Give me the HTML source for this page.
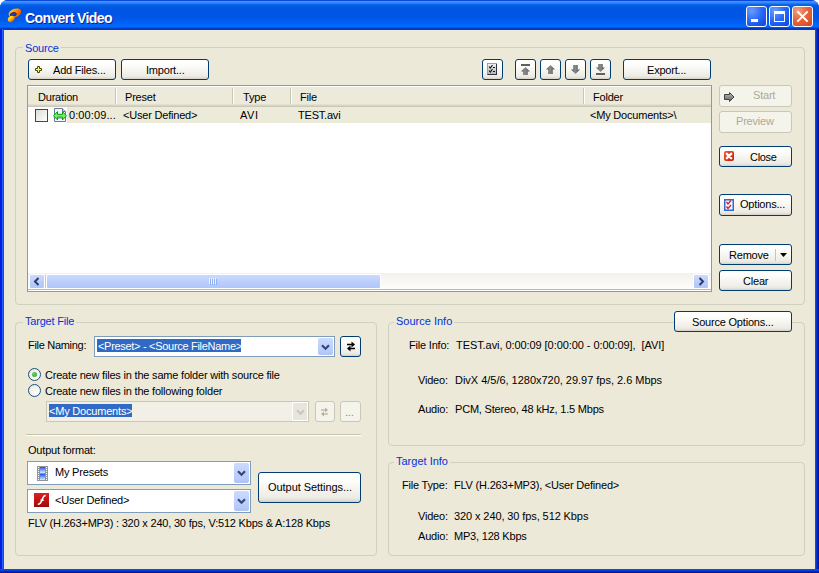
<!DOCTYPE html>
<html><head><meta charset="utf-8"><style>
*{box-sizing:border-box;margin:0;padding:0}
html,body{width:819px;height:573px;overflow:hidden;background:#fff}
body{position:relative;font-family:"Liberation Sans",sans-serif;font-size:11px;color:#000}
.a{position:absolute}
.t{position:absolute;white-space:pre;line-height:13px;letter-spacing:-0.2px}
.g{position:absolute;border:1px solid #d0d0bf;border-radius:4px}
.gl{position:absolute;color:#0034d8;background:#ece9d8;padding:0 2px;line-height:13px;white-space:pre;letter-spacing:-0.2px}
.b{position:absolute;border:1px solid #003c74;border-radius:3px;
background:linear-gradient(180deg,#ffffff 0%,#fdfdfb 25%,#f4f3ee 60%,#ecebe5 85%,#e3e0d6 93%,#d6d0c5 100%)}
.bd{position:absolute;border:1px solid #c9c7ba;border-radius:3px;background:#f5f4ea}
.cb{position:absolute;border:1px solid #7f9db9;background:#fff}
.dd{position:absolute;border-radius:2px;background:linear-gradient(180deg,#cddafd 0%,#c1d2fc 40%,#b7caf8 80%,#adc1f4 100%)}
.tb{position:absolute;border:1px solid #fff;border-radius:3px}
svg{position:absolute;overflow:visible}
</style></head><body>
<div class="a" style="left:0;top:0;width:819px;height:573px;border-radius:8px 8px 0 0;background:#0a3bd8;overflow:hidden"></div>
<div class="a" style="left:0;top:0;width:819px;height:30px;border-radius:8px 8px 0 0;background:linear-gradient(180deg,#0a48e0 0px,#0a48e0 1px,#3d95ff 1px,#3a93ff 2px,#2a86fc 3px,#1070f0 4px,#0660e6 5px,#0058e2 7px,#0054e2 10px,#0056e8 17px,#005ff2 22px,#0066fa 25px,#006cff 27px,#0040d0 28px,#0034c0 29px,#0040d0 30px)"></div>
<div class="a" style="left:0;top:29px;width:4px;height:544px;background:linear-gradient(90deg,#0a1ee0 0,#0a1ee0 2px,#2464ff 2px,#2464ff 3px,#0a4ef0 3px)"></div>
<div class="a" style="left:815px;top:29px;width:4px;height:544px;background:linear-gradient(90deg,#0a4cf0 0,#0a4cf0 1px,#0434d4 1px,#0434d4 2px,#0020b8 2px,#0020b8 3px,#00169a 3px)"></div>
<div class="a" style="left:0;top:569px;width:819px;height:4px;background:linear-gradient(180deg,#0a4cf0 0,#0a4cf0 1px,#0840e0 1px,#0840e0 2px,#0024c0 2px,#0024c0 3px,#00189e 3px)"></div>
<div class="a" style="left:4px;top:30px;width:811px;height:539px;background:#ece9d8"></div>
<svg style="left:6px;top:7px" width="18" height="17" viewBox="0 0 18 17">
<defs><linearGradient id="og" x1="0" y1="0" x2="1" y2="1"><stop offset="0" stop-color="#ffd030"/><stop offset="0.45" stop-color="#ff9a00"/><stop offset="1" stop-color="#e83800"/></linearGradient>
<linearGradient id="yg" x1="0" y1="0" x2="0" y2="1"><stop offset="0" stop-color="#fff020"/><stop offset="0.5" stop-color="#ffb000"/><stop offset="1" stop-color="#f05000"/></linearGradient></defs>
<ellipse cx="8.9" cy="6" rx="6.5" ry="4.3" transform="rotate(-20 8.9 6)" fill="url(#og)"/>
<ellipse cx="7.3" cy="7.4" rx="3.1" ry="1.7" transform="rotate(-12 7.3 7.4)" fill="#1048c8" stroke="#301050" stroke-width="0.8"/>
<ellipse cx="5.2" cy="12" rx="3.6" ry="2.7" transform="rotate(-38 5.2 12)" fill="url(#yg)"/>
</svg>
<div class="t" style="left:25px;top:10px;color:#fff;font-weight:bold;font-size:14px;letter-spacing:-0.6px;line-height:17px;text-shadow:1px 1px 0 #0a2090">Convert Video</div>
<div class="tb" style="left:746px;top:6px;width:21px;height:21px;background:radial-gradient(circle at 25% 20%,#6a9cff 0%,#2c6cf8 45%,#1552e8 80%,#0d48dc 100%)"></div>
<div class="a" style="left:751px;top:19px;width:7px;height:3px;background:#fff"></div>
<div class="tb" style="left:769px;top:6px;width:21px;height:21px;background:radial-gradient(circle at 25% 20%,#6a9cff 0%,#2c6cf8 45%,#1552e8 80%,#0d48dc 100%)"></div>
<div class="a" style="left:774px;top:11px;width:11px;height:11px;border:1px solid #fff;border-top-width:3px"></div>
<div class="tb" style="left:792px;top:6px;width:21px;height:21px;background:radial-gradient(circle at 25% 20%,#f0a080 0%,#e56a44 40%,#d9512a 80%,#cc4420 100%)"></div>
<svg style="left:797px;top:11px" width="11" height="11" viewBox="0 0 11 11"><path d="M1 1L10 10M10 1L1 10" stroke="#fff" stroke-width="1.9" stroke-linecap="square"/></svg>
<div class="g" style="left:15px;top:47px;width:790px;height:258px;"></div>
<div class="g" style="left:15px;top:322px;width:362px;height:234px;"></div>
<div class="g" style="left:388px;top:322px;width:417px;height:124px;"></div>
<div class="g" style="left:388px;top:462px;width:417px;height:94px;"></div>
<div class="gl" style="left:23px;top:42px">Source</div>
<div class="gl" style="left:23px;top:315px">Target File</div>
<div class="gl" style="left:394px;top:315px;letter-spacing:0px">Source Info</div>
<div class="gl" style="left:394px;top:455px;letter-spacing:0px">Target Info</div>
<div class="b" style="left:28px;top:59px;width:88px;height:21px;"></div>
<svg style="left:35px;top:66px" width="7" height="7" viewBox="0 0 7 7"><path d="M2.5 0.5H4.5V2.5H6.5V4.5H4.5V6.5H2.5V4.5H0.5V2.5H2.5Z" fill="#f8f070" stroke="#4a4800" stroke-width="1"/></svg>
<div class="t" style="left:53px;top:64px">Add Files...</div>
<div class="b" style="left:121px;top:59px;width:88px;height:21px;"></div>
<div class="t" style="left:146px;top:64px">Import...</div>
<div class="b" style="left:482px;top:59px;width:21px;height:21px;"></div>
<div class="b" style="left:515px;top:59px;width:21px;height:21px;"></div>
<div class="b" style="left:540px;top:59px;width:21px;height:21px;"></div>
<div class="b" style="left:565px;top:59px;width:21px;height:21px;"></div>
<div class="b" style="left:590px;top:59px;width:21px;height:21px;"></div>
<svg style="left:487px;top:63px" width="10" height="12" viewBox="0 0 10 12">
<defs><linearGradient id="cg" x1="0" y1="0" x2="0" y2="1"><stop offset="0" stop-color="#f4f4f4"/><stop offset="1" stop-color="#b4b4b4"/></linearGradient></defs>
<rect x="0.5" y="0.5" width="9" height="11" fill="url(#cg)" stroke="#a0a0a0"/>
<path d="M9.5 1v11M0.5 11.5h9" stroke="#303040"/>
<path d="M2 3.5l1.3 1.5 2.2-3M2 7.5l1.3 1.5 2.2-3" fill="none" stroke="#101010" stroke-width="1.1"/>
<path d="M6 4.5h2M6 8.5h2" stroke="#101010" stroke-width="1.2"/>
</svg>
<svg style="left:521px;top:64px" width="10" height="11" viewBox="0 0 10 11"><defs><linearGradient id="gg" x1="0" y1="0" x2="1" y2="0"><stop offset="0" stop-color="#505050"/><stop offset="0.45" stop-color="#8c8c8c"/><stop offset="1" stop-color="#505050"/></linearGradient></defs><rect x="0" y="0" width="9" height="2" fill="#606060"/><path d="M4.5 3L9 7.5H6.8V11H2.2V7.5H0z" fill="url(#gg)"/></svg>
<svg style="left:546px;top:65px" width="10" height="9" viewBox="0 0 10 9"><defs><linearGradient id="gg" x1="0" y1="0" x2="1" y2="0"><stop offset="0" stop-color="#505050"/><stop offset="0.45" stop-color="#8c8c8c"/><stop offset="1" stop-color="#505050"/></linearGradient></defs><path d="M4.5 0L9 4.5H6.8V9H2.2V4.5H0z" fill="url(#gg)"/></svg>
<svg style="left:571px;top:65px" width="10" height="9" viewBox="0 0 10 9"><defs><linearGradient id="gg" x1="0" y1="0" x2="1" y2="0"><stop offset="0" stop-color="#505050"/><stop offset="0.45" stop-color="#8c8c8c"/><stop offset="1" stop-color="#505050"/></linearGradient></defs><path d="M4.5 9L9 4.5H6.8V0H2.2V4.5H0z" fill="url(#gg)"/></svg>
<svg style="left:596px;top:64px" width="10" height="11" viewBox="0 0 10 11"><defs><linearGradient id="gg" x1="0" y1="0" x2="1" y2="0"><stop offset="0" stop-color="#505050"/><stop offset="0.45" stop-color="#8c8c8c"/><stop offset="1" stop-color="#505050"/></linearGradient></defs><path d="M4.5 8L9 3.5H6.8V0H2.2V3.5H0z" fill="url(#gg)"/><rect x="0" y="9" width="9" height="2" fill="#606060"/></svg>
<div class="b" style="left:623px;top:59px;width:88px;height:21px;"></div>
<div class="t" style="left:647px;top:64px">Export...</div>
<div class="a" style="left:27px;top:85px;width:685px;height:207px;border:1px solid #7f9db9;background:#fff"></div>
<div class="a" style="left:28px;top:87px;width:683px;height:17px;background:#ebeadb"></div>
<div class="a" style="left:28px;top:104px;width:683px;height:1px;background:#e3e0d1"></div>
<div class="a" style="left:28px;top:105px;width:683px;height:1px;background:#d8d4c4"></div>
<div class="a" style="left:28px;top:106px;width:683px;height:1px;background:#ccc8b7"></div>
<div class="a" style="left:115px;top:88px;width:1px;height:16px;background:#c8c5b4"></div>
<div class="a" style="left:116px;top:88px;width:1px;height:16px;background:#fff"></div>
<div class="a" style="left:232px;top:88px;width:1px;height:16px;background:#c8c5b4"></div>
<div class="a" style="left:233px;top:88px;width:1px;height:16px;background:#fff"></div>
<div class="a" style="left:290px;top:88px;width:1px;height:16px;background:#c8c5b4"></div>
<div class="a" style="left:291px;top:88px;width:1px;height:16px;background:#fff"></div>
<div class="a" style="left:583px;top:88px;width:1px;height:16px;background:#c8c5b4"></div>
<div class="a" style="left:584px;top:88px;width:1px;height:16px;background:#fff"></div>
<div class="t" style="left:38px;top:91px">Duration</div>
<div class="t" style="left:125px;top:91px">Preset</div>
<div class="t" style="left:243px;top:91px">Type</div>
<div class="t" style="left:300px;top:91px">File</div>
<div class="t" style="left:593px;top:91px">Folder</div>
<div class="a" style="left:67px;top:107px;width:644px;height:16px;background:#ecead9"></div>
<div class="a" style="left:35px;top:109px;width:13px;height:13px;border:1px solid #1c5180;background:linear-gradient(135deg,#dcdcd7 0%,#f4f4f2 70%,#fff 100%)"></div>
<svg style="left:53px;top:108px" width="15" height="14" viewBox="0 0 15 14">
<path d="M1.5 0.5h8l3 3v10h-11z" fill="#f4f6fc" stroke="#6c7898"/>
<path d="M9.5 0.5v3h3" fill="#c8d0e8" stroke="#6c7898"/>
<path d="M3 10.5h7" stroke="#b0b8e0"/>
<path d="M0.5 7.75L4.5 3.6V6.3H9.5V3.6L13.5 7.75L9.5 11.9V9.2H4.5V11.9Z" fill="#6cf06c" stroke="#0c9a0c" stroke-width="1"/>
</svg>
<div class="t" style="left:69px;top:109px;letter-spacing:0.1px">0:00:09...</div>
<div class="t" style="left:123px;top:109px">&lt;User Defined&gt;</div>
<div class="t" style="left:240px;top:109px;letter-spacing:0.6px">AVI</div>
<div class="t" style="left:298px;top:109px">TEST.avi</div>
<div class="t" style="left:590px;top:109px">&lt;My Documents&gt;\</div>
<div class="a" style="left:28px;top:273px;width:683px;height:17px;background:linear-gradient(180deg,#f3f1ec 0%,#fefefe 100%)"></div>
<div class="a" style="left:29px;top:274px;width:16px;height:15px;border:1px solid #fff;border-radius:2px;background:linear-gradient(180deg,#cbdaff 0%,#bccffb 50%,#b0c6f8 100%)"></div>
<svg style="left:33px;top:277px" width="8" height="9" viewBox="0 0 8 9"><path d="M5.5 1L2 4.5L5.5 8" fill="none" stroke="#2c3a6a" stroke-width="2"/></svg>
<div class="a" style="left:46px;top:274px;width:335px;height:15px;border:1px solid #fff;border-radius:2px;background:linear-gradient(180deg,#cbdaff 0%,#bccffb 50%,#b0c6f8 100%)"></div>
<div class="a" style="left:209px;top:278px;width:1px;height:6px;background:#eef3ff"></div>
<div class="a" style="left:210px;top:279px;width:1px;height:6px;background:#8cb0f8"></div>
<div class="a" style="left:211px;top:278px;width:1px;height:6px;background:#eef3ff"></div>
<div class="a" style="left:212px;top:279px;width:1px;height:6px;background:#8cb0f8"></div>
<div class="a" style="left:213px;top:278px;width:1px;height:6px;background:#eef3ff"></div>
<div class="a" style="left:214px;top:279px;width:1px;height:6px;background:#8cb0f8"></div>
<div class="a" style="left:215px;top:278px;width:1px;height:6px;background:#eef3ff"></div>
<div class="a" style="left:216px;top:279px;width:1px;height:6px;background:#8cb0f8"></div>
<div class="a" style="left:693px;top:274px;width:16px;height:15px;border:1px solid #fff;border-radius:2px;background:linear-gradient(180deg,#cbdaff 0%,#bccffb 50%,#b0c6f8 100%)"></div>
<div class="a" style="left:28px;top:289px;width:683px;height:1px;background:#a9bbdf"></div>
<div class="a" style="left:45px;top:275px;width:1px;height:13px;background:#b9c8e8"></div>
<svg style="left:697px;top:277px" width="8" height="9" viewBox="0 0 8 9"><path d="M2.5 1L6 4.5L2.5 8" fill="none" stroke="#2c3a6a" stroke-width="2"/></svg>
<div class="bd" style="left:719px;top:85px;width:73px;height:22px;"></div>
<svg style="left:724px;top:92px" width="11" height="10" viewBox="0 0 11 10">
<defs><linearGradient id="sg" x1="0" y1="0" x2="0" y2="1"><stop offset="0" stop-color="#c0c0c0"/><stop offset="1" stop-color="#606060"/></linearGradient></defs>
<path d="M0.5 2.5h5v-2l4.5 4.5-4.5 4.5v-2h-5z" fill="url(#sg)" stroke="#404040"/></svg>
<div class="t" style="left:753px;top:89px;color:#aca899">Start</div>
<div class="bd" style="left:719px;top:111px;width:73px;height:22px;"></div>
<div class="t" style="left:736px;top:115px;color:#aca899">Preview</div>
<div class="b" style="left:719px;top:146px;width:73px;height:21px;"></div>
<svg style="left:724px;top:151px" width="10" height="10" viewBox="0 0 10 10">
<defs><linearGradient id="xg" x1="0" y1="0" x2="1" y2="1"><stop offset="0" stop-color="#f05a30"/><stop offset="1" stop-color="#c81808"/></linearGradient></defs>
<rect x="0" y="0" width="10" height="10" rx="2" fill="url(#xg)"/>
<path d="M2.8 2.8L7.2 7.2M7.2 2.8L2.8 7.2" stroke="#fff" stroke-width="2.4" stroke-linecap="round"/></svg>
<div class="t" style="left:750px;top:151px;letter-spacing:-0.3px">Close</div>
<div class="b" style="left:719px;top:194px;width:73px;height:22px;"></div>
<svg style="left:724px;top:199px" width="10" height="12" viewBox="0 0 10 12">
<rect x="0.75" y="0.75" width="8.5" height="10.5" fill="#f0f8ff" stroke="#2c6ad8" stroke-width="1.5"/>
<path d="M2.5 3l1.5 2 3-3.5M2.5 7.5l1.5 2 3-3.5" fill="none" stroke="#d02020" stroke-width="1.3"/></svg>
<div class="t" style="left:740px;top:198px">Options...</div>
<div class="b" style="left:719px;top:244px;width:73px;height:21px;"></div>
<div class="t" style="left:729px;top:249px">Remove</div>
<div class="a" style="left:775px;top:249px;width:1px;height:12px;background:#c8c5b4"></div>
<svg style="left:780px;top:253px" width="7" height="4" viewBox="0 0 7 4"><path d="M0 0h7L3.5 4z" fill="#000"/></svg>
<div class="b" style="left:719px;top:270px;width:73px;height:21px;"></div>
<div class="t" style="left:743px;top:275px">Clear</div>
<div class="t" style="left:28px;top:339px;letter-spacing:-0.3px">File Naming:</div>
<div class="cb" style="left:94px;top:336px;width:241px;height:21px;"></div>
<div class="a" style="left:97px;top:339px;width:144px;height:13px;background:#316ac5"></div>
<div class="t" style="left:98px;top:340px;color:#fff;letter-spacing:-0.3px">&lt;Preset&gt; - &lt;Source FileName&gt;</div>
<div class="dd" style="left:318px;top:338px;width:15px;height:17px;"></div>
<svg style="left:321px;top:344px" width="9" height="6" viewBox="0 0 9 6"><path d="M1 1.2l3.5 3.5L8 1.2" fill="none" stroke="#34477a" stroke-width="2.2"/></svg>
<div class="b" style="left:340px;top:336px;width:21px;height:21px;"></div>
<svg style="left:346px;top:341px" width="10" height="11" viewBox="0 0 10 11">
<path d="M1 3.5h6.5" stroke="#000" stroke-width="1.5"/><path d="M5.5 0.5l3.5 3-3.5 3z" fill="#000"/>
<path d="M2.5 7.5h6.5" stroke="#000" stroke-width="1.5"/><path d="M4.5 4.5l-3.5 3 3.5 3z" fill="#000"/>
</svg>
<div class="a" style="left:28px;top:368px;width:13px;height:13px;border-radius:50%;border:1px solid #1c5180;background:radial-gradient(circle at 70% 70%,#fff 0%,#f0f0ea 60%,#dcdcd4 100%)"></div>
<div class="a" style="left:32px;top:372px;width:5px;height:5px;border-radius:50%;background:radial-gradient(circle at 40% 40%,#6fd26f,#21a121)"></div>
<div class="a" style="left:28px;top:384px;width:13px;height:13px;border-radius:50%;border:1px solid #1c5180;background:radial-gradient(circle at 70% 70%,#fff 0%,#f0f0ea 60%,#dcdcd4 100%)"></div>
<div class="t" style="left:45px;top:369px">Create new files in the same folder with source file</div>
<div class="t" style="left:45px;top:385px">Create new files in the following folder</div>
<div class="a" style="left:46px;top:401px;width:263px;height:21px;border:1px solid #c9c7ba;background:#f2f0e6"></div>
<div class="a" style="left:49px;top:404px;width:83px;height:13px;background:#316ac5"></div>
<div class="t" style="left:49px;top:405px;color:#fff">&lt;My Documents&gt;</div>
<div class="a" style="left:292px;top:402px;width:16px;height:19px;border:1px solid #fff;background:#e8e6dc"></div>
<svg style="left:296px;top:409px" width="9" height="6" viewBox="0 0 9 6"><path d="M1 1.2l3.5 3.5L8 1.2" fill="none" stroke="#c9c7ba" stroke-width="2.2"/></svg>
<div class="bd" style="left:315px;top:401px;width:20px;height:21px;"></div>
<svg style="left:320px;top:407px" width="9" height="10" viewBox="0 0 9 10">
<path d="M1 3h5" stroke="#b4b1a2" stroke-width="1.3"/><path d="M5 0.5l3 2.5-3 2.5z" fill="#b4b1a2"/>
<path d="M3 7h5" stroke="#b4b1a2" stroke-width="1.3"/><path d="M4 4.5l-3 2.5 3 2.5z" fill="#b4b1a2"/>
</svg>
<div class="bd" style="left:340px;top:401px;width:21px;height:21px;"></div>
<div class="t" style="left:345px;top:406px;color:#8a877a">...</div>
<div class="a" style="left:26px;top:434px;width:335px;height:1px;background:#c5c2b2"></div>
<div class="a" style="left:26px;top:435px;width:336px;height:1px;background:#fff"></div>
<div class="t" style="left:28px;top:444px">Output format:</div>
<div class="cb" style="left:27px;top:461px;width:224px;height:24px;"></div>
<svg style="left:37px;top:466px" width="11" height="15" viewBox="0 0 11 15">
<defs><linearGradient id="fb" x1="0" y1="0" x2="0" y2="1"><stop offset="0" stop-color="#2a4cf0"/><stop offset="0.6" stop-color="#8ab4f8"/><stop offset="1" stop-color="#d8ecff"/></linearGradient></defs>
<rect x="0" y="0" width="11" height="15" fill="#949494"/>
<rect x="3" y="1" width="5" height="6" fill="url(#fb)"/><rect x="3" y="8" width="5" height="6" fill="url(#fb)"/>
<path d="M1 1.5h1M1 3.5h1M1 5.5h1M1 7.5h1M1 9.5h1M1 11.5h1M1 13.5h1M9 1.5h1M9 3.5h1M9 5.5h1M9 7.5h1M9 9.5h1M9 11.5h1M9 13.5h1" stroke="#fff"/>
</svg>
<div class="t" style="left:55px;top:466px">My Presets</div>
<div class="dd" style="left:234px;top:463px;width:15px;height:20px;"></div>
<svg style="left:237px;top:470px" width="9" height="6" viewBox="0 0 9 6"><path d="M1 1.2l3.5 3.5L8 1.2" fill="none" stroke="#34477a" stroke-width="2.2"/></svg>
<div class="cb" style="left:27px;top:489px;width:224px;height:24px;"></div>
<svg style="left:34px;top:493px" width="15" height="14" viewBox="0 0 15 14">
<defs><linearGradient id="rg" x1="0" y1="0" x2="0" y2="1"><stop offset="0" stop-color="#e02020"/><stop offset="1" stop-color="#a00808"/></linearGradient></defs>
<rect x="0" y="0" width="15" height="14" fill="url(#rg)"/>
<path d="M3.8 11.3c2.6 0 3.6-2.2 4.5-5s1.8-3.8 3.4-3.8M6.5 7.2h3.2" fill="none" stroke="#fff" stroke-width="1.5"/>
</svg>
<div class="t" style="left:55px;top:494px">&lt;User Defined&gt;</div>
<div class="dd" style="left:234px;top:491px;width:15px;height:20px;"></div>
<svg style="left:237px;top:498px" width="9" height="6" viewBox="0 0 9 6"><path d="M1 1.2l3.5 3.5L8 1.2" fill="none" stroke="#34477a" stroke-width="2.2"/></svg>
<div class="b" style="left:258px;top:472px;width:103px;height:31px;"></div>
<div class="t" style="left:268px;top:481px;letter-spacing:-0.05px">Output Settings...</div>
<div class="t" style="left:28px;top:517px">FLV (H.263+MP3) : 320 x 240, 30 fps, V:512 Kbps &amp; A:128 Kbps</div>
<div class="b" style="left:674px;top:311px;width:118px;height:21px;"></div>
<div class="t" style="left:692px;top:316px">Source Options...</div>
<div class="t" style="left:409px;top:339px">File Info:</div>
<div class="t" style="left:456px;top:339px;letter-spacing:-0.07px">TEST.avi, 0:00:09 [0:00:00 - 0:00:09],  [AVI]</div>
<div class="t" style="left:418px;top:374px">Video:</div>
<div class="t" style="left:455px;top:374px;letter-spacing:-0.02px">DivX 4/5/6, 1280x720, 29.97 fps, 2.6 Mbps</div>
<div class="t" style="left:418px;top:403px">Audio:</div>
<div class="t" style="left:455px;top:403px">PCM, Stereo, 48 kHz, 1.5 Mbps</div>
<div class="t" style="left:402px;top:479px">File Type:</div>
<div class="t" style="left:454px;top:479px">FLV (H.263+MP3), &lt;User Defined&gt;</div>
<div class="t" style="left:418px;top:510px">Video:</div>
<div class="t" style="left:454px;top:510px;letter-spacing:-0.1px">320 x 240, 30 fps, 512 Kbps</div>
<div class="t" style="left:418px;top:530px">Audio:</div>
<div class="t" style="left:454px;top:530px">MP3, 128 Kbps</div>
</body></html>
